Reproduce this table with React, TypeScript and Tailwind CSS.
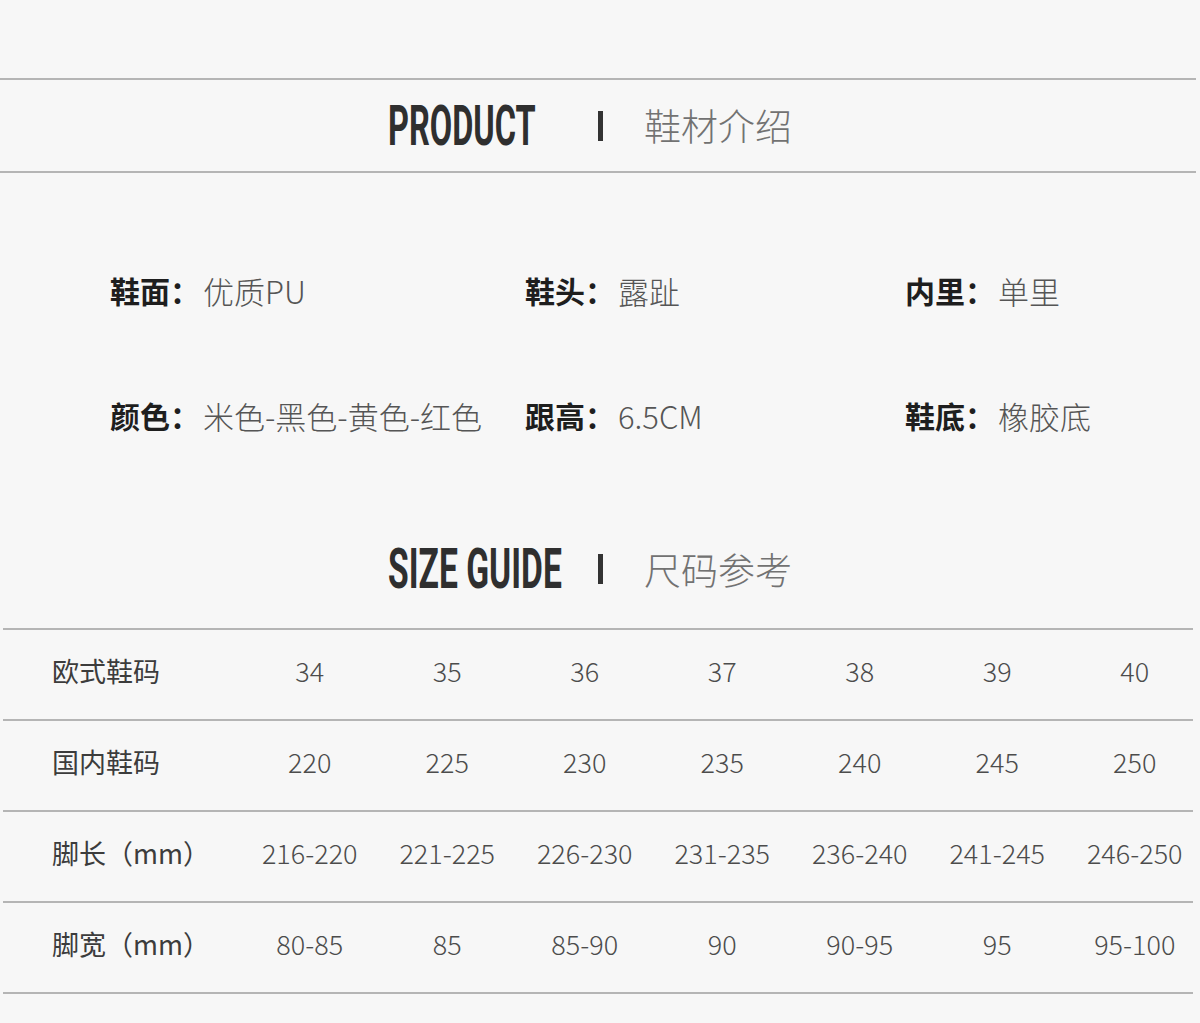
import React from "react";

const attrs = [
  [
    { label: "鞋面：", value: "优质PU" },
    { label: "鞋头：", value: "露趾" },
    { label: "内里：", value: "单里" },
  ],
  [
    { label: "颜色：", value: "米色-黑色-黄色-红色" },
    { label: "跟高：", value: "6.5CM" },
    { label: "鞋底：", value: "橡胶底" },
  ],
];

const sizes: [string, string[]][] = [
  ["欧式鞋码", ["34", "35", "36", "37", "38", "39", "40"]],
  ["国内鞋码", ["220", "225", "230", "235", "240", "245", "250"]],
  ["脚长（mm）", ["216-220", "221-225", "226-230", "231-235", "236-240", "241-245", "246-250"]],
  ["脚宽（mm）", ["80-85", "85", "85-90", "90", "90-95", "95", "95-100"]],
];

const SectionTitle = ({ en, zh, enBox }: { en: string; zh: string; enBox: string }) => (
  <div className="flex items-center pl-[388px] h-[50px]">
    {/* condensed english title */}
    <div className="w-[210px]">
      <span
        className={`inline-block origin-left whitespace-nowrap font-['Roboto',sans-serif] font-bold text-[56px] leading-none text-[#2f2f2f] ${enBox}`}
      >
        {en}
      </span>
    </div>
    <span className="inline-block w-[5px] h-[30px] bg-[#333333]" />
    <span className="ml-[41px] font-light text-[37px] leading-none text-[#727272]">{zh}</span>
  </div>
);

export default function App() {
  return (
    <div className="w-[1200px] h-[1023px] bg-[#f7f7f7] font-['Noto_Sans_CJK_SC',sans-serif] overflow-hidden">
      <div className="h-[78px]" />
      <div className="h-[2px] w-[1196px] bg-[#b5b5b5]" />
      <div className="h-[91px] flex items-center">
        <div className="w-full">
          <SectionTitle en="PRODUCT" zh="鞋材介绍" enBox="scale-x-[0.58]" />
        </div>
      </div>
      <div className="h-[2px] w-[1196px] bg-[#b5b5b5]" />

      {/* Attributes */}
      <div className="pt-[92px] pl-[110px] flex flex-col gap-[75px]">
        {attrs.map((row, i) => (
          <div key={i} className="grid grid-cols-[415px_380px_1fr] h-[50px] items-center">
            {row.map((a) => (
              <div key={a.label} className="flex items-center leading-none whitespace-nowrap">
                <span className="text-[30px] font-bold text-[#1e1e1e]">{a.label}</span>
                <span className="ml-[3px] text-[31px] font-light text-[#555555]">{a.value}</span>
              </div>
            ))}
          </div>
        ))}
      </div>

      <div className="mt-[104px]">
        <SectionTitle en="SIZE GUIDE" zh="尺码参考" enBox="scale-x-[0.6]" />
      </div>

      {/* Size table */}
      <div className="mt-[34px] ml-[3px] w-[1190px] border-t-2 border-[#b5b5b5]">
        {sizes.map(([label, vals]) => (
          <div
            key={label}
            className="grid grid-cols-[238px_repeat(7,137.5px)] h-[91px] pb-[8px] items-center border-b-2 border-[#b5b5b5]"
          >
            <div className="pl-[49px] text-[27px] font-normal text-[#3c3c3c] whitespace-nowrap leading-none">
              {label}
            </div>
            {vals.map((v, j) => (
              <div key={j} className="text-center text-[27px] font-light text-[#4c4c4c] leading-none">
                {v}
              </div>
            ))}
          </div>
        ))}
      </div>
    </div>
  );
}
